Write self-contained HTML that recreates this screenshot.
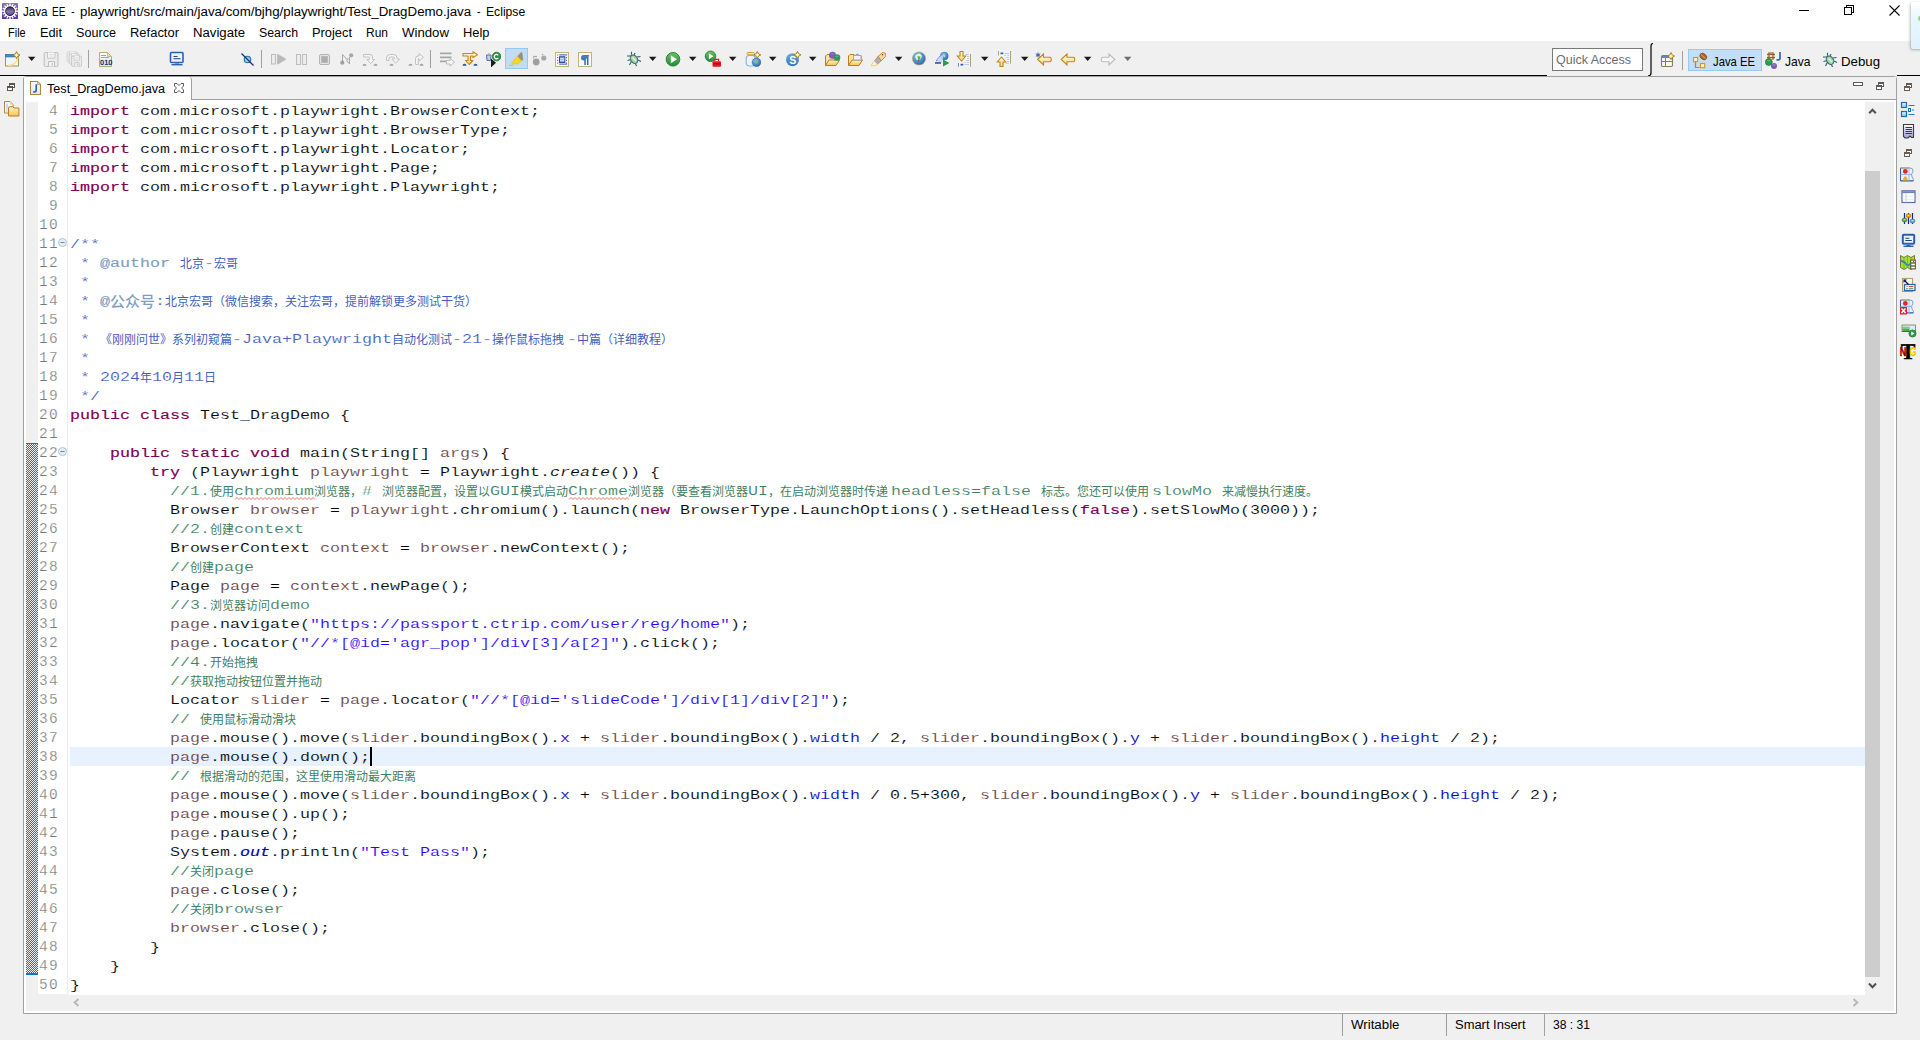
<!DOCTYPE html>
<html lang="zh"><head><meta charset="utf-8"><title>Java EE - playwright/src/main/java/com/bjhg/playwright/Test_DragDemo.java - Eclipse</title>
<style>
html,body{margin:0;padding:0}
body{width:1920px;height:1040px;overflow:hidden;background:#f0f0f0;position:relative;font-family:"Liberation Sans","Noto Sans CJK SC",sans-serif}
div,span,svg{position:absolute}
.t{white-space:pre;line-height:16px;transform-origin:0 0;font-family:"Liberation Sans","Noto Sans CJK SC",sans-serif}
.c{white-space:pre;line-height:19px;height:19px;font-family:"Liberation Mono","Noto Sans CJK SC",monospace;font-size:12.5px;transform-origin:0 0;transform:scaleX(1.3331);-webkit-text-stroke:0.12px #fff}
.c.hl{-webkit-text-stroke-color:#e8f2fe}
.c.b{-webkit-text-stroke:0.15px currentColor}
.k{white-space:pre;line-height:19px;height:19px;font-family:"Liberation Mono","Noto Sans CJK SC",monospace;font-size:12px}
.n{white-space:pre;line-height:19px;height:19px;font-family:"Liberation Mono",monospace;font-size:14.5px;letter-spacing:1.3px;color:#787878;-webkit-text-stroke:0.25px #fff}
b{font-weight:bold}
i{font-style:italic}
</style></head>
<body>
<div style="left:0px;top:0px;width:1920px;height:41px;background:#fff;"></div>
<span class="t" style="left:23px;top:3.87px;font-size:12.5px;color:#000;transform:scaleX(0.9279);">Java</span>
<span class="t" style="left:52px;top:3.87px;font-size:12.5px;color:#000;transform:scaleX(0.7976);">EE</span>
<span class="t" style="left:70.8px;top:3.87px;font-size:12.5px;color:#000;transform:scaleX(0.8649);">-</span>
<span class="t" style="left:79.7px;top:3.87px;font-size:12.5px;color:#000;transform:scaleX(1.0642);">playwright/src/main/java/com/bjhg/playwright/Test_DragDemo.java</span>
<span class="t" style="left:476.7px;top:3.87px;font-size:12.5px;color:#000;transform:scaleX(0.8409);">-</span>
<span class="t" style="left:485.8px;top:3.87px;font-size:12.5px;color:#000;transform:scaleX(0.9728);">Eclipse</span>
<span class="t" style="left:8px;top:24.87px;font-size:12.5px;color:#000;transform:scaleX(0.8788);">File</span>
<span class="t" style="left:40px;top:24.87px;font-size:12.5px;color:#000;transform:scaleX(1.0214);">Edit</span>
<span class="t" style="left:76px;top:24.87px;font-size:12.5px;color:#000;transform:scaleX(1.0100);">Source</span>
<span class="t" style="left:130px;top:24.87px;font-size:12.5px;color:#000;transform:scaleX(1.0373);">Refactor</span>
<span class="t" style="left:193px;top:24.87px;font-size:12.5px;color:#000;transform:scaleX(1.0541);">Navigate</span>
<span class="t" style="left:259px;top:24.87px;font-size:12.5px;color:#000;transform:scaleX(0.9848);">Search</span>
<span class="t" style="left:312px;top:24.87px;font-size:12.5px;color:#000;transform:scaleX(1.0282);">Project</span>
<span class="t" style="left:366px;top:24.87px;font-size:12.5px;color:#000;transform:scaleX(0.9595);">Run</span>
<span class="t" style="left:402px;top:24.87px;font-size:12.5px;color:#000;transform:scaleX(1.0572);">Window</span>
<span class="t" style="left:463px;top:24.87px;font-size:12.5px;color:#000;transform:scaleX(1.0308);">Help</span>
<svg style="left:1790px;top:0;width:130px;height:22px" viewBox="0 0 130 22"><g stroke="#000" stroke-width="1" fill="none" shape-rendering="crispEdges"><path d="M9 10.5h10"/><path d="M54.5 7.5h7v7h-7z M56.5 7.5v-2h7v7h-2"/></g><path d="M99.5 5.5l10 10M109.5 5.5l-10 10" stroke="#000" stroke-width="1.1" fill="none"/></svg>
<div style="left:0px;top:41px;width:1920px;height:34px;background:#f0f0f0;"></div>
<div style="left:0px;top:75px;width:1547px;height:1px;background:#000;"></div>
<div style="left:1897px;top:75px;width:23px;height:1px;background:#000;"></div>
<div style="left:1552px;top:48px;width:89px;height:21px;background:#fff;border:1px solid #7a7a7a"></div>
<span class="t" style="left:1556px;top:51.70px;font-size:13px;color:#6d6d6d;transform:scaleX(0.9612);">Quick Access</span>
<svg style="left:1644px;top:42px;width:10px;height:36px" viewBox="0 0 10 36"><path d="M9 1.5 Q7 1.5 7 4 V31 Q7 33.8 4 34" stroke="#000" stroke-width="1.2" fill="none"/></svg>
<div style="left:1682px;top:51px;width:1px;height:19px;background:#a0a0a0;"></div>
<div style="left:1688px;top:49px;width:72px;height:20px;background:#c5ddf5;border:1px solid #99c9f5"></div>
<span class="t" style="left:1712.5px;top:53.70px;font-size:13px;color:#000;transform:scaleX(0.8675);">Java EE</span>
<span class="t" style="left:1785px;top:53.70px;font-size:13px;color:#000;transform:scaleX(0.9287);">Java</span>
<span class="t" style="left:1841px;top:53.70px;font-size:13px;color:#000;transform:scaleX(1.0181);">Debug</span>
<div style="left:23px;top:76px;width:1872px;height:936px;border:1px solid #a0a0a0;border-radius:3px 3px 0 0;background:#fff"></div>
<div style="left:24px;top:77px;width:1872px;height:22px;background:#f0f0f0;"></div>
<div style="left:191px;top:99px;width:1705px;height:1px;background:#a0a0a0;"></div>
<div style="left:24px;top:77px;width:167px;height:23px;background:#fff;border-right:1px solid #a0a0a0;border-radius:3px 3px 0 0"></div>
<span class="t" style="left:47px;top:80.87px;font-size:12.5px;color:#000;transform:scaleX(1.0110);">Test_DragDemo.java</span>
<div style="left:26px;top:102px;width:12px;height:909px;background:#f0f0f0;"></div>
<div style="left:38px;top:994px;width:30px;height:17px;background:#f0f0f0;"></div>
<div style="left:68px;top:995px;width:1826px;height:16px;background:#f0f0f0;"></div>
<div style="left:26px;top:443px;width:12px;height:532px;background-color:#0078d7;background-image:conic-gradient(#0078d7 25%,#f0f0f0 0 50%,#0078d7 0 75%,#f0f0f0 0);background-size:2px 2px;background-position:1px 0"></div>
<div style="left:26px;top:443px;width:12px;height:1px;background:#0078d7;"></div>
<div style="left:26px;top:973px;width:12px;height:2px;background:#0078d7;"></div>
<div style="left:67px;top:102px;width:1px;height:892px;background:#ededed;"></div>
<div style="left:70px;top:747px;width:1795px;height:19px;background:#e8f2fe;"></div>
<div style="left:370px;top:747px;width:2px;height:19px;background:#000;"></div>
<div style="left:1865px;top:102px;width:29px;height:909px;background:#f0f0f0;"></div>
<div style="left:1865px;top:171px;width:15px;height:806px;background:#cdcdcd;"></div>
<svg style="left:1864px;top:103px;width:17px;height:17px" viewBox="0 0 17 17"><path d="M5.200 10.200l3.300-3.500 3.300 3.500" stroke="#505050" stroke-width="2" fill="none"/></svg>
<svg style="left:1864px;top:977px;width:17px;height:17px" viewBox="0 0 17 17"><path d="M5 6.500l3.500 3.700 3.500-3.700" stroke="#505050" stroke-width="2" fill="none"/></svg>
<svg style="left:68px;top:994px;width:17px;height:17px" viewBox="0 0 17 17"><path d="M10.500 5l-3.800 3.500 3.800 3.500" stroke="#b8b8b8" stroke-width="2" fill="none"/></svg>
<svg style="left:1847px;top:994px;width:17px;height:17px" viewBox="0 0 17 17"><path d="M6.500 5l3.800 3.500-3.800 3.500" stroke="#b8b8b8" stroke-width="2" fill="none"/></svg>
<div style="left:1342px;top:1014px;width:1px;height:22px;background:#a0a0a0;"></div>
<div style="left:1446px;top:1014px;width:1px;height:22px;background:#a0a0a0;"></div>
<div style="left:1544px;top:1014px;width:1px;height:22px;background:#a0a0a0;"></div>
<span class="t" style="left:1350.5px;top:1016.87px;font-size:12.5px;color:#000;transform:scaleX(1.0632);">Writable</span>
<span class="t" style="left:1454.5px;top:1016.87px;font-size:12.5px;color:#000;transform:scaleX(1.0357);">Smart Insert</span>
<span class="t" style="left:1552.5px;top:1016.87px;font-size:12.5px;color:#000;transform:scaleX(0.9680);">38 : 31</span>
<span class="c b" style="left:70px;top:103px;color:#7f0055;">import</span>
<span class="c" style="left:130px;top:103px;"> com.microsoft.playwright.BrowserContext;</span>
<span class="c b" style="left:70px;top:122px;color:#7f0055;">import</span>
<span class="c" style="left:130px;top:122px;"> com.microsoft.playwright.BrowserType;</span>
<span class="c b" style="left:70px;top:141px;color:#7f0055;">import</span>
<span class="c" style="left:130px;top:141px;"> com.microsoft.playwright.Locator;</span>
<span class="c b" style="left:70px;top:160px;color:#7f0055;">import</span>
<span class="c" style="left:130px;top:160px;"> com.microsoft.playwright.Page;</span>
<span class="c b" style="left:70px;top:179px;color:#7f0055;">import</span>
<span class="c" style="left:130px;top:179px;"> com.microsoft.playwright.Playwright;</span>
<span class="c" style="left:70px;top:236px;color:#3f5fbf;">/**</span>
<span class="c" style="left:70px;top:255px;color:#3f5fbf;"> * </span>
<span class="c b" style="left:100px;top:255px;color:#7f9fbf;">@author</span>
<span class="k" style="left:180px;top:256px;color:#3f5fbf;">北京</span>
<span class="c" style="left:204px;top:255px;color:#3f5fbf;">-</span>
<span class="k" style="left:214px;top:256px;color:#3f5fbf;">宏哥</span>
<span class="c" style="left:70px;top:274px;color:#3f5fbf;"> * </span>
<span class="c" style="left:70px;top:293px;color:#3f5fbf;"> * </span>
<span class="c b" style="left:100px;top:293px;color:#7f9fbf;">@</span>
<span class="k" style="left:110px;top:294px;color:#7f9fbf;font-size:15px;font-weight:500;">公众号</span>
<span class="c" style="left:155px;top:293px;color:#3f5fbf;">:</span>
<span class="k" style="left:165px;top:294px;color:#3f5fbf;">北京宏哥（微信搜索，关注宏哥，提前解锁更多测试干货）</span>
<span class="c" style="left:70px;top:312px;color:#3f5fbf;"> * </span>
<span class="c" style="left:70px;top:331px;color:#3f5fbf;"> * </span>
<span class="k" style="left:100px;top:332px;color:#3f5fbf;">《刚刚问世》系列初窥篇</span>
<span class="c" style="left:232px;top:331px;color:#3f5fbf;">-Java+Playwright</span>
<span class="k" style="left:392px;top:332px;color:#3f5fbf;">自动化测试</span>
<span class="c" style="left:452px;top:331px;color:#3f5fbf;">-21-</span>
<span class="k" style="left:492px;top:332px;color:#3f5fbf;">操作鼠标拖拽 </span>
<span class="c" style="left:567px;top:331px;color:#3f5fbf;">-</span>
<span class="k" style="left:577px;top:332px;color:#3f5fbf;">中篇（详细教程）</span>
<span class="c" style="left:70px;top:350px;color:#3f5fbf;"> * </span>
<span class="c" style="left:70px;top:369px;color:#3f5fbf;"> * 2024</span>
<span class="k" style="left:140px;top:370px;color:#3f5fbf;">年</span>
<span class="c" style="left:152px;top:369px;color:#3f5fbf;">10</span>
<span class="k" style="left:172px;top:370px;color:#3f5fbf;">月</span>
<span class="c" style="left:184px;top:369px;color:#3f5fbf;">11</span>
<span class="k" style="left:204px;top:370px;color:#3f5fbf;">日</span>
<span class="c" style="left:70px;top:388px;color:#3f5fbf;"> */</span>
<span class="c b" style="left:70px;top:407px;color:#7f0055;">public</span>
<span class="c b" style="left:140px;top:407px;color:#7f0055;">class</span>
<span class="c" style="left:190px;top:407px;"> Test_DragDemo {</span>
<span class="c b" style="left:110px;top:445px;color:#7f0055;">public</span>
<span class="c b" style="left:180px;top:445px;color:#7f0055;">static</span>
<span class="c b" style="left:250px;top:445px;color:#7f0055;">void</span>
<span class="c" style="left:290px;top:445px;"> main(String[] </span>
<span class="c" style="left:440px;top:445px;color:#6a3e3e;">args</span>
<span class="c" style="left:480px;top:445px;">) {</span>
<span class="c b" style="left:150px;top:464px;color:#7f0055;">try</span>
<span class="c" style="left:180px;top:464px;"> (Playwright </span>
<span class="c" style="left:310px;top:464px;color:#6a3e3e;">playwright</span>
<span class="c" style="left:410px;top:464px;"> = Playwright.</span>
<span class="c" style="left:550px;top:464px;font-style:italic;">create</span>
<span class="c" style="left:610px;top:464px;">()) {</span>
<span class="c" style="left:170px;top:483px;color:#3f7f5f;">//1.</span>
<span class="k" style="left:210px;top:484px;color:#3f7f5f;">使用</span>
<span class="c" style="left:234px;top:483px;color:#3f7f5f;">chromium</span>
<span class="k" style="left:314px;top:484px;color:#3f7f5f;">浏览器，</span>
<span class="c" style="left:362px;top:483px;color:#3f7f5f;"># </span>
<span class="k" style="left:382px;top:484px;color:#3f7f5f;">浏览器配置，设置以</span>
<span class="c" style="left:490px;top:483px;color:#3f7f5f;">GUI</span>
<span class="k" style="left:520px;top:484px;color:#3f7f5f;">模式启动</span>
<span class="c" style="left:568px;top:483px;color:#3f7f5f;">Chrome</span>
<span class="k" style="left:628px;top:484px;color:#3f7f5f;">浏览器（要查看浏览器</span>
<span class="c" style="left:748px;top:483px;color:#3f7f5f;">UI</span>
<span class="k" style="left:768px;top:484px;color:#3f7f5f;">，在启动浏览器时传递 </span>
<span class="c" style="left:891px;top:483px;color:#3f7f5f;">headless=false </span>
<span class="k" style="left:1041px;top:484px;color:#3f7f5f;">标志。您还可以使用 </span>
<span class="c" style="left:1152px;top:483px;color:#3f7f5f;">slowMo </span>
<span class="k" style="left:1222px;top:484px;color:#3f7f5f;">来减慢执行速度。</span>
<span class="c" style="left:70px;top:502px;">          Browser </span>
<span class="c" style="left:250px;top:502px;color:#6a3e3e;">browser</span>
<span class="c" style="left:320px;top:502px;"> = </span>
<span class="c" style="left:350px;top:502px;color:#6a3e3e;">playwright</span>
<span class="c" style="left:450px;top:502px;">.chromium().launch(</span>
<span class="c b" style="left:640px;top:502px;color:#7f0055;">new</span>
<span class="c" style="left:670px;top:502px;"> BrowserType.LaunchOptions().setHeadless(</span>
<span class="c b" style="left:1080px;top:502px;color:#7f0055;">false</span>
<span class="c" style="left:1130px;top:502px;">).setSlowMo(3000));</span>
<span class="c" style="left:170px;top:521px;color:#3f7f5f;">//2.</span>
<span class="k" style="left:210px;top:522px;color:#3f7f5f;">创建</span>
<span class="c" style="left:234px;top:521px;color:#3f7f5f;">context</span>
<span class="c" style="left:70px;top:540px;">          BrowserContext </span>
<span class="c" style="left:320px;top:540px;color:#6a3e3e;">context</span>
<span class="c" style="left:390px;top:540px;"> = </span>
<span class="c" style="left:420px;top:540px;color:#6a3e3e;">browser</span>
<span class="c" style="left:490px;top:540px;">.newContext();</span>
<span class="c" style="left:170px;top:559px;color:#3f7f5f;">//</span>
<span class="k" style="left:190px;top:560px;color:#3f7f5f;">创建</span>
<span class="c" style="left:214px;top:559px;color:#3f7f5f;">page</span>
<span class="c" style="left:70px;top:578px;">          Page </span>
<span class="c" style="left:220px;top:578px;color:#6a3e3e;">page</span>
<span class="c" style="left:260px;top:578px;"> = </span>
<span class="c" style="left:290px;top:578px;color:#6a3e3e;">context</span>
<span class="c" style="left:360px;top:578px;">.newPage();</span>
<span class="c" style="left:170px;top:597px;color:#3f7f5f;">//3.</span>
<span class="k" style="left:210px;top:598px;color:#3f7f5f;">浏览器访问</span>
<span class="c" style="left:270px;top:597px;color:#3f7f5f;">demo</span>
<span class="c" style="left:170px;top:616px;color:#6a3e3e;">page</span>
<span class="c" style="left:210px;top:616px;">.navigate(</span>
<span class="c" style="left:310px;top:616px;color:#2a00ff;">&quot;https:</span>
<span class="c" style="left:380px;top:616px;color:#2a00ff;">//passport.ctrip.com/user/reg/home&quot;</span>
<span class="c" style="left:730px;top:616px;">);</span>
<span class="c" style="left:170px;top:635px;color:#6a3e3e;">page</span>
<span class="c" style="left:210px;top:635px;">.locator(</span>
<span class="c" style="left:300px;top:635px;color:#2a00ff;">&quot;//*[@id=&#x27;agr_pop&#x27;]/div[3]/a[2]&quot;</span>
<span class="c" style="left:620px;top:635px;">).click();</span>
<span class="c" style="left:170px;top:654px;color:#3f7f5f;">//4.</span>
<span class="k" style="left:210px;top:655px;color:#3f7f5f;">开始拖拽</span>
<span class="c" style="left:170px;top:673px;color:#3f7f5f;">//</span>
<span class="k" style="left:190px;top:674px;color:#3f7f5f;">获取拖动按钮位置并拖动</span>
<span class="c" style="left:70px;top:692px;">          Locator </span>
<span class="c" style="left:250px;top:692px;color:#6a3e3e;">slider</span>
<span class="c" style="left:310px;top:692px;"> = </span>
<span class="c" style="left:340px;top:692px;color:#6a3e3e;">page</span>
<span class="c" style="left:380px;top:692px;">.locator(</span>
<span class="c" style="left:470px;top:692px;color:#2a00ff;">&quot;//*[@id=&#x27;slideCode&#x27;]/div[1]/div[2]&quot;</span>
<span class="c" style="left:830px;top:692px;">);</span>
<span class="c" style="left:170px;top:711px;color:#3f7f5f;">// </span>
<span class="k" style="left:200px;top:712px;color:#3f7f5f;">使用鼠标滑动滑块</span>
<span class="c" style="left:170px;top:730px;color:#6a3e3e;">page</span>
<span class="c" style="left:210px;top:730px;">.mouse().move(</span>
<span class="c" style="left:350px;top:730px;color:#6a3e3e;">slider</span>
<span class="c" style="left:410px;top:730px;">.boundingBox().</span>
<span class="c" style="left:560px;top:730px;color:#0000c0;">x</span>
<span class="c" style="left:570px;top:730px;"> + </span>
<span class="c" style="left:600px;top:730px;color:#6a3e3e;">slider</span>
<span class="c" style="left:660px;top:730px;">.boundingBox().</span>
<span class="c" style="left:810px;top:730px;color:#0000c0;">width</span>
<span class="c" style="left:860px;top:730px;"> / 2, </span>
<span class="c" style="left:920px;top:730px;color:#6a3e3e;">slider</span>
<span class="c" style="left:980px;top:730px;">.boundingBox().</span>
<span class="c" style="left:1130px;top:730px;color:#0000c0;">y</span>
<span class="c" style="left:1140px;top:730px;"> + </span>
<span class="c" style="left:1170px;top:730px;color:#6a3e3e;">slider</span>
<span class="c" style="left:1230px;top:730px;">.boundingBox().</span>
<span class="c" style="left:1380px;top:730px;color:#0000c0;">height</span>
<span class="c" style="left:1440px;top:730px;"> / 2);</span>
<span class="c hl" style="left:170px;top:749px;color:#6a3e3e;">page</span>
<span class="c hl" style="left:210px;top:749px;">.mouse().down();</span>
<span class="c" style="left:170px;top:768px;color:#3f7f5f;">// </span>
<span class="k" style="left:200px;top:769px;color:#3f7f5f;">根据滑动的范围，这里使用滑动最大距离</span>
<span class="c" style="left:170px;top:787px;color:#6a3e3e;">page</span>
<span class="c" style="left:210px;top:787px;">.mouse().move(</span>
<span class="c" style="left:350px;top:787px;color:#6a3e3e;">slider</span>
<span class="c" style="left:410px;top:787px;">.boundingBox().</span>
<span class="c" style="left:560px;top:787px;color:#0000c0;">x</span>
<span class="c" style="left:570px;top:787px;"> + </span>
<span class="c" style="left:600px;top:787px;color:#6a3e3e;">slider</span>
<span class="c" style="left:660px;top:787px;">.boundingBox().</span>
<span class="c" style="left:810px;top:787px;color:#0000c0;">width</span>
<span class="c" style="left:860px;top:787px;"> / 0.5+300, </span>
<span class="c" style="left:980px;top:787px;color:#6a3e3e;">slider</span>
<span class="c" style="left:1040px;top:787px;">.boundingBox().</span>
<span class="c" style="left:1190px;top:787px;color:#0000c0;">y</span>
<span class="c" style="left:1200px;top:787px;"> + </span>
<span class="c" style="left:1230px;top:787px;color:#6a3e3e;">slider</span>
<span class="c" style="left:1290px;top:787px;">.boundingBox().</span>
<span class="c" style="left:1440px;top:787px;color:#0000c0;">height</span>
<span class="c" style="left:1500px;top:787px;"> / 2);</span>
<span class="c" style="left:170px;top:806px;color:#6a3e3e;">page</span>
<span class="c" style="left:210px;top:806px;">.mouse().up();</span>
<span class="c" style="left:170px;top:825px;color:#6a3e3e;">page</span>
<span class="c" style="left:210px;top:825px;">.pause();</span>
<span class="c" style="left:70px;top:844px;">          System.</span>
<span class="c b" style="left:240px;top:844px;color:#0000c0;font-style:italic;">out</span>
<span class="c" style="left:270px;top:844px;">.println(</span>
<span class="c" style="left:360px;top:844px;color:#2a00ff;">&quot;Test Pass&quot;</span>
<span class="c" style="left:470px;top:844px;">);</span>
<span class="c" style="left:170px;top:863px;color:#3f7f5f;">//</span>
<span class="k" style="left:190px;top:864px;color:#3f7f5f;">关闭</span>
<span class="c" style="left:214px;top:863px;color:#3f7f5f;">page</span>
<span class="c" style="left:170px;top:882px;color:#6a3e3e;">page</span>
<span class="c" style="left:210px;top:882px;">.close();</span>
<span class="c" style="left:170px;top:901px;color:#3f7f5f;">//</span>
<span class="k" style="left:190px;top:902px;color:#3f7f5f;">关闭</span>
<span class="c" style="left:214px;top:901px;color:#3f7f5f;">browser</span>
<span class="c" style="left:170px;top:920px;color:#6a3e3e;">browser</span>
<span class="c" style="left:240px;top:920px;">.close();</span>
<span class="c" style="left:70px;top:939px;">        }</span>
<span class="c" style="left:70px;top:958px;">    }</span>
<span class="c" style="left:70px;top:977px;">}</span>
<span class="n" style="left:49px;top:102px">4</span>
<span class="n" style="left:49px;top:121px">5</span>
<span class="n" style="left:49px;top:140px">6</span>
<span class="n" style="left:49px;top:159px">7</span>
<span class="n" style="left:49px;top:178px">8</span>
<span class="n" style="left:49px;top:197px">9</span>
<span class="n" style="left:39px;top:216px">10</span>
<span class="n" style="left:39px;top:235px">11</span>
<span class="n" style="left:39px;top:254px">12</span>
<span class="n" style="left:39px;top:273px">13</span>
<span class="n" style="left:39px;top:292px">14</span>
<span class="n" style="left:39px;top:311px">15</span>
<span class="n" style="left:39px;top:330px">16</span>
<span class="n" style="left:39px;top:349px">17</span>
<span class="n" style="left:39px;top:368px">18</span>
<span class="n" style="left:39px;top:387px">19</span>
<span class="n" style="left:39px;top:406px">20</span>
<span class="n" style="left:39px;top:425px">21</span>
<span class="n" style="left:39px;top:444px">22</span>
<span class="n" style="left:39px;top:463px">23</span>
<span class="n" style="left:39px;top:482px">24</span>
<span class="n" style="left:39px;top:501px">25</span>
<span class="n" style="left:39px;top:520px">26</span>
<span class="n" style="left:39px;top:539px">27</span>
<span class="n" style="left:39px;top:558px">28</span>
<span class="n" style="left:39px;top:577px">29</span>
<span class="n" style="left:39px;top:596px">30</span>
<span class="n" style="left:39px;top:615px">31</span>
<span class="n" style="left:39px;top:634px">32</span>
<span class="n" style="left:39px;top:653px">33</span>
<span class="n" style="left:39px;top:672px">34</span>
<span class="n" style="left:39px;top:691px">35</span>
<span class="n" style="left:39px;top:710px">36</span>
<span class="n" style="left:39px;top:729px">37</span>
<span class="n" style="left:39px;top:748px">38</span>
<span class="n" style="left:39px;top:767px">39</span>
<span class="n" style="left:39px;top:786px">40</span>
<span class="n" style="left:39px;top:805px">41</span>
<span class="n" style="left:39px;top:824px">42</span>
<span class="n" style="left:39px;top:843px">43</span>
<span class="n" style="left:39px;top:862px">44</span>
<span class="n" style="left:39px;top:881px">45</span>
<span class="n" style="left:39px;top:900px">46</span>
<span class="n" style="left:39px;top:919px">47</span>
<span class="n" style="left:39px;top:938px">48</span>
<span class="n" style="left:39px;top:957px">49</span>
<span class="n" style="left:39px;top:976px">50</span>
<svg style="left:58px;top:238px;width:10px;height:10px" viewBox="0 0 10 10"><circle cx="4.500" cy="4.500" r="4" fill="#e8eff6" stroke="#b4c4d8" stroke-width="1"/><path d="M2.300 4.500h4.400" stroke="#7c8ca4" stroke-width="1.100"/></svg>
<svg style="left:58px;top:447px;width:10px;height:10px" viewBox="0 0 10 10"><circle cx="4.500" cy="4.500" r="4" fill="#e8eff6" stroke="#b4c4d8" stroke-width="1"/><path d="M2.300 4.500h4.400" stroke="#7c8ca4" stroke-width="1.100"/></svg>
<svg style="left:0;top:0;width:1920px;height:1040px;pointer-events:none" viewBox="0 0 1920 1040"><path d="M235 499.5 L237 497.5 L239 499.5 L241 497.5 L243 499.5 L245 497.5 L247 499.5 L249 497.5 L251 499.5 L253 497.5 L255 499.5 L257 497.5 L259 499.5 L261 497.5 L263 499.5 L265 497.5 L267 499.5 L269 497.5 L271 499.5 L273 497.5 L275 499.5 L277 497.5 L279 499.5 L281 497.5 L283 499.5 L285 497.5 L287 499.5 L289 497.5 L291 499.5 L293 497.5 L295 499.5 L297 497.5 L299 499.5 L301 497.5 L303 499.5 L305 497.5 L307 499.5 L309 497.5 L311 499.5 L313 497.5 L315 499.5" stroke="#f0785a" stroke-width="1" fill="none"/></svg>
<svg style="left:0;top:0;width:1920px;height:1040px;pointer-events:none" viewBox="0 0 1920 1040"><path d="M569 499.5 L571 497.5 L573 499.5 L575 497.5 L577 499.5 L579 497.5 L581 499.5 L583 497.5 L585 499.5 L587 497.5 L589 499.5 L591 497.5 L593 499.5 L595 497.5 L597 499.5 L599 497.5 L601 499.5 L603 497.5 L605 499.5 L607 497.5 L609 499.5 L611 497.5 L613 499.5 L615 497.5 L617 499.5 L619 497.5 L621 499.5 L623 497.5 L625 499.5 L627 497.5 L629 499.5" stroke="#f0785a" stroke-width="1" fill="none"/></svg>
<svg style="left:0;top:0;width:0;height:0"><defs>
<linearGradient id="gGold" x1="0" y1="0" x2="0" y2="1"><stop offset="0" stop-color="#fffbe6"/><stop offset="1" stop-color="#f7d774"/></linearGradient>
<linearGradient id="gGreen" x1="0" y1="0" x2="0" y2="1"><stop offset="0" stop-color="#6cc25c"/><stop offset="1" stop-color="#1f8a3a"/></linearGradient>
<linearGradient id="gFold" x1="0" y1="0" x2="0" y2="1"><stop offset="0" stop-color="#fff3c4"/><stop offset="1" stop-color="#f2c45c"/></linearGradient>
<linearGradient id="gGray" x1="0" y1="0" x2="0" y2="1"><stop offset="0" stop-color="#f4f4f4"/><stop offset="1" stop-color="#dcdcdc"/></linearGradient>
<linearGradient id="gBlue" x1="0" y1="0" x2="0" y2="1"><stop offset="0" stop-color="#6aa6dc"/><stop offset="1" stop-color="#3a78b8"/></linearGradient>
<linearGradient id="gPage" x1="0" y1="0" x2="0" y2="1"><stop offset="0" stop-color="#ffffff"/><stop offset="1" stop-color="#dbe7f7"/></linearGradient>
<radialGradient id="gGlobe" cx="0.4" cy="0.35" r="0.7"><stop offset="0" stop-color="#7fd0f0"/><stop offset="1" stop-color="#1f5fb8"/></radialGradient>
</defs></svg>
<div style="left:88px;top:50px;width:1px;height:18px;background:#a0a0a0;"></div>
<div style="left:261px;top:50px;width:1px;height:18px;background:#a0a0a0;"></div>
<div style="left:430px;top:50px;width:1px;height:18px;background:#a0a0a0;"></div>
<svg style="left:4px;top:51px;width:16px;height:16px" viewBox="0 0 16 16"><rect x="1.5" y="3.5" width="13" height="11.5" fill="#eef6fd" stroke="#a88f4a"/><rect x="1.5" y="3.5" width="9" height="2.5" fill="#3c8ad0" stroke="#2f72b8" stroke-width=".6"/><path d="M4 14.5q8 0 10-8" stroke="#f6dd8a" stroke-width="1.4" fill="none"/><path d="M12.5 0.6l1.200 2.300 2.300 1.200-2.300 1.200-1.200 2.300-1.200-2.300-2.300-1.200 2.300-1.200z" fill="#e9bd3a" stroke="#a87c14" stroke-width=".9" stroke-linejoin="round"/><path d="M12.5 2.4v3.400M10.8 4.1h3.400" stroke="#fffdf0" stroke-width="1.100"/></svg>
<svg style="left:28px;top:56px;width:8px;height:6px" viewBox="0 0 8 6"><path d="M0 .8h7.4L3.7 5z" fill="#1a1a1a"/></svg>
<svg style="left:43px;top:51px;width:16px;height:16px" viewBox="0 0 16 16"><g transform="translate(1 1) scale(1.0)" opacity="1"><path d="M1.500 0.500h11.200q1.300 0 1.300 1.300v11.400q0 1.300-1.300 1.300h-11.200q-1.300 0-1.300-1.300v-11.400q0-1.300 1.300-1.300z" fill="#ececec" stroke="#bdbdbd"/><path d="M3.500 0.500v5.800h7.500v-5.800" fill="#f6f6f6" stroke="#c6c6c6"/><path d="M5 2.500h4.500M5 4.200h4.500" stroke="#dcdcdc" stroke-width=".8"/><path d="M4.500 14.500v-5h6v5" fill="#f2f2f2" stroke="#bdbdbd"/><path d="M8.300 11v2.500" stroke="#c0c0c0" stroke-width="1.200"/></g></svg>
<svg style="left:66px;top:51px;width:16px;height:16px" viewBox="0 0 16 16"><g transform="translate(1 0.5) scale(0.72)" opacity="0.7"><path d="M1.500 0.500h11.200q1.300 0 1.300 1.300v11.400q0 1.300-1.300 1.300h-11.200q-1.300 0-1.300-1.300v-11.400q0-1.300 1.300-1.300z" fill="#ececec" stroke="#bdbdbd"/><path d="M3.500 0.500v5.800h7.500v-5.800" fill="#f6f6f6" stroke="#c6c6c6"/><path d="M5 2.500h4.500M5 4.200h4.500" stroke="#dcdcdc" stroke-width=".8"/><path d="M4.500 14.500v-5h6v5" fill="#f2f2f2" stroke="#bdbdbd"/><path d="M8.300 11v2.500" stroke="#c0c0c0" stroke-width="1.200"/></g><g transform="translate(3 2.5) scale(0.72)" opacity="0.85"><path d="M1.500 0.500h11.200q1.300 0 1.300 1.300v11.400q0 1.300-1.300 1.300h-11.200q-1.300 0-1.300-1.300v-11.400q0-1.300 1.300-1.300z" fill="#ececec" stroke="#bdbdbd"/><path d="M3.500 0.500v5.800h7.500v-5.800" fill="#f6f6f6" stroke="#c6c6c6"/><path d="M5 2.500h4.500M5 4.200h4.500" stroke="#dcdcdc" stroke-width=".8"/><path d="M4.500 14.500v-5h6v5" fill="#f2f2f2" stroke="#bdbdbd"/><path d="M8.300 11v2.500" stroke="#c0c0c0" stroke-width="1.200"/></g><g transform="translate(5.5 4.8) scale(0.72)" opacity="1"><path d="M1.500 0.500h11.200q1.300 0 1.300 1.300v11.400q0 1.300-1.300 1.300h-11.200q-1.300 0-1.300-1.300v-11.400q0-1.300 1.300-1.300z" fill="#ececec" stroke="#bdbdbd"/><path d="M3.500 0.500v5.800h7.500v-5.800" fill="#f6f6f6" stroke="#c6c6c6"/><path d="M5 2.500h4.500M5 4.200h4.500" stroke="#dcdcdc" stroke-width=".8"/><path d="M4.500 14.500v-5h6v5" fill="#f2f2f2" stroke="#bdbdbd"/><path d="M8.300 11v2.500" stroke="#c0c0c0" stroke-width="1.200"/></g></svg>
<svg style="left:98px;top:51px;width:16px;height:16px" viewBox="0 0 16 16"><path d="M1.5 1.5h8l4 4v10h-12z" fill="url(#gPage)" stroke="#b9a877"/><path d="M9.5 1.5v4h4z" fill="#f3dfa0" stroke="#b9a877" stroke-width=".7"/><path d="M3 4.5h5M3 6.5h8" stroke="#8aa2d0" stroke-width="1.2"/><text x="2" y="14.200" font-family="Liberation Sans,sans-serif" font-weight="bold" font-size="7.500" fill="#16306c" textLength="12.500" lengthAdjust="spacingAndGlyphs" style="text-rendering:geometricPrecision">010</text></svg>
<svg style="left:169px;top:51px;width:16px;height:16px" viewBox="0 0 16 16"><rect x="1.5" y="1.5" width="12.5" height="10" rx="1" fill="#e9f4ff" stroke="#2a62b4" stroke-width="1.6"/><path d="M4.5 5.5h4M4.5 7.7h7" stroke="#27408a" stroke-width="1.1"/><path d="M6 12.5h4v1h-4z" fill="#2a62b4"/><path d="M2.5 13.7h11" stroke="#2a62b4" stroke-width="1.4"/></svg>
<svg style="left:239px;top:51px;width:16px;height:16px" viewBox="0 0 16 16"><circle cx="8.5" cy="8.5" r="3.2" fill="#a9cde3" stroke="#2b7fb2" stroke-width="1.3"/><path d="M2.5 2.5l12 12" stroke="#1d2c7c" stroke-width="1.2"/></svg>
<svg style="left:270px;top:51px;width:16px;height:16px" viewBox="0 0 16 16"><rect x="1.5" y="3.5" width="4" height="9.5" fill="#ececec" stroke="#bdbdbd"/><path d="M7.5 3.2v10l8.5-5z" fill="#b9b9b9" stroke="#b0b0b0" stroke-width=".6"/></svg>
<svg style="left:293px;top:51px;width:16px;height:16px" viewBox="0 0 16 16"><rect x="3.5" y="3.5" width="4" height="10" fill="#ececec" stroke="#bdbdbd"/><rect x="9.5" y="3.5" width="4" height="10" fill="#ececec" stroke="#bdbdbd"/></svg>
<svg style="left:316px;top:51px;width:16px;height:16px" viewBox="0 0 16 16"><rect x="3.5" y="3.5" width="10" height="10" rx="1.5" fill="#e4e4e4" stroke="#b4b4b4"/><rect x="5.2" y="5.2" width="6.6" height="6.6" fill="#adadad"/></svg>
<svg style="left:339px;top:51px;width:16px;height:16px" viewBox="0 0 16 16"><path d="M3.5 10.5v-7l4 4.5h2l-2 1.5 3 3.5v-7" stroke="#a8a8a8" stroke-width="1" fill="none"/><circle cx="3.3" cy="11.7" r="2.1" fill="#a0a0a0"/><circle cx="12.2" cy="4.3" r="2.1" fill="#a8a8a8"/></svg>
<svg style="left:362px;top:51px;width:16px;height:16px" viewBox="0 0 16 16"><path d="M1.500 3.500H8Q10.500 3.500 10.500 6V8.500H12.500L8.700 12.700L5 8.500H7.500V6.500Q7.500 6 7 6H1.500Z" fill="#f4f4f4" stroke="#c2c2c2"/><path d="M0.5 14.800a2 2 0 0 1 4 0z" fill="#a4a4a4"/><path d="M11.5 14.800a2 2 0 0 1 4 0z" fill="#a4a4a4"/></svg>
<svg style="left:385px;top:51px;width:16px;height:16px" viewBox="0 0 16 16"><path d="M1.500 9.500V7Q1.500 3.500 5 3.500H8.500Q12 3.500 12 7V8H14.500L10.700 12.300L7 8H9.500V7.500Q9.500 6 8 6H5.500Q4 6 4 7.500V9.500Z" fill="#f4f4f4" stroke="#c2c2c2"/><path d="M4.5 14.800a2 2 0 0 1 4 0z" fill="#a4a4a4"/></svg>
<svg style="left:408px;top:51px;width:16px;height:16px" viewBox="0 0 16 16"><path d="M7.500 13.500V7.500Q7.500 5 10 5H11V2.500L15.500 6.300L11 10V7.500H10.300V13.500Z" fill="#f4f4f4" stroke="#c2c2c2"/><path d="M0.5 14.800a2 2 0 0 1 4 0z" fill="#a4a4a4"/><path d="M11.5 14.800a2 2 0 0 1 4 0z" fill="#a4a4a4"/></svg>
<svg style="left:439px;top:51px;width:16px;height:16px" viewBox="0 0 16 16"><path d="M1 2.300h11.500M1 6.300h11.500M1 10.300h7" stroke="#a6a6a6" stroke-width="1.700"/><path d="M7.500 9.500H11V7.500L15.500 11.200L11 15V13H7.500Z" fill="#f6f6f6" stroke="#bcbcbc"/></svg>
<svg style="left:462px;top:51px;width:16px;height:16px" viewBox="0 0 16 16"><path d="M1 2.500H11V0.800L15.500 3.700L11 6.600V5H8.500V9.500H11L7.200 13.500L3.500 9.500H6V5H1Z" fill="url(#gGold)" stroke="#c4861c" stroke-width="1.100" stroke-linejoin="round"/><path d="M0.5 14.800a2 2 0 0 1 4 0z" fill="#2a5a94"/><path d="M11.5 14.800a2 2 0 0 1 4 0z" fill="#2a5a94"/></svg>
<svg style="left:485px;top:51px;width:16px;height:16px" viewBox="0 0 16 16"><path d="M1.500 4h4.500l-.5 5.500h-3.500z" fill="#b8d2f0" stroke="#5a6ab8"/><path d="M2.500 3.500q1.200-2 2.500 0" stroke="#c9a0a0" fill="none"/><circle cx="11.600" cy="5.500" r="4.300" fill="#2f8f4a" stroke="#1f7a3a" stroke-width=".8"/><path d="M13.300 4.300a2.200 2.200 0 1 0 0 2.500" stroke="#fff" stroke-width="1.300" fill="none"/><path d="M6 7.500v9l5-4.700z" fill="#1c1c1c"/></svg>
<div style="left:505px;top:48px;width:21px;height:19px;background:#c4dcf3;border:1px solid #92c9f7"></div>
<svg style="left:508px;top:51px;width:16px;height:16px" viewBox="0 0 16 16"><path d="M9.500 5.500l3.500-4 1 .3.800 7-1.300 1z" fill="#9a9276" stroke="#8a8266" stroke-width=".5"/><path d="M3.500 12l6-6.500 4 4.300-4 3.400z" fill="#f5d824" stroke="#e2bd18" stroke-width=".6"/><path d="M1 14.300l4.500-.2" stroke="#eec81c" stroke-width="1.200"/></svg>
<svg style="left:532px;top:51px;width:16px;height:16px" viewBox="0 0 16 16"><path d="M1.500 5.500h3.500" stroke="#a8a8a8" stroke-width="1.200"/><circle cx="4.200" cy="11" r="3.400" fill="#a0a0a0"/><circle cx="11.800" cy="7" r="2.600" fill="#a8a8a8"/><circle cx="10.500" cy="3.500" r=".8" fill="#a8a8a8"/><path d="M1.500 5.500v2" stroke="#a8a8a8"/></svg>
<svg style="left:554px;top:51px;width:16px;height:16px" viewBox="0 0 16 16"><rect x="1.500" y="1.500" width="13" height="14" fill="#fff" stroke="#c6b276" stroke-width="1"/><path d="M3.200 4h1M3.200 6.700h1M3.200 9.400h1M3.200 12.100h1M12 6.700h1M12 9.400h1M12 12.100h1" stroke="#3c5ea8" stroke-width="1.200"/><path d="M5.200 3.900h8M5.200 13.100h8" stroke="#5a78b8" stroke-width="1.100"/><rect x="5.500" y="5.800" width="5.300" height="5.600" fill="#9ab4e0" stroke="#2c4a8c" stroke-width="1.100"/><path d="M6 7.700h4.300M6 9.500h4.300" stroke="#e8f0fc" stroke-width=".7"/></svg>
<svg style="left:577px;top:51px;width:16px;height:16px" viewBox="0 0 16 16"><rect x="1.500" y="1.500" width="13" height="14" fill="#f6fcff" stroke="#c6b276" stroke-width="1"/><path d="M8 4.500v9.500M10.700 4.500v9.500" stroke="#2f6cb0" stroke-width="1.500"/><path d="M12.200 4h-5.500a2.700 2.700 0 0 0 0 5.400h1.300z" fill="#3f7cc0"/></svg>
<svg style="left:626px;top:51px;width:16px;height:16px" viewBox="0 0 16 16"><g stroke="#2b5f63" stroke-width="1.100" fill="none"><path d="M5.500 0.800v3M9 2l-1 2.200M1 5h4M1.500 9.500l3.500-1M3.500 14l1.800-3.500M14.500 5.500l-3.500 0.500M15 10.500l-3-1.500M10.500 15l-1.500-3.500"/></g><ellipse cx="8" cy="8.200" rx="3.300" ry="4.500" transform="rotate(-35 8 8.200)" fill="#a9d3a3" stroke="#2a6f80" stroke-width="1.100"/><path d="M6.500 6.500l3.500 3.500" stroke="#e4f4e0" stroke-width="1.400"/></svg>
<svg style="left:649px;top:56px;width:8px;height:6px" viewBox="0 0 8 6"><path d="M0 .8h7.4L3.7 5z" fill="#1a1a1a"/></svg>
<svg style="left:665px;top:51px;width:16px;height:16px" viewBox="0 0 16 16"><circle cx="8" cy="8.300" r="6.800" fill="url(#gGreen)" stroke="#1f7a35" stroke-width=".9"/><path d="M5.800 4.300v8l6.200-4z" fill="#fff"/></svg>
<svg style="left:689px;top:56px;width:8px;height:6px" viewBox="0 0 8 6"><path d="M0 .8h7.4L3.7 5z" fill="#1a1a1a"/></svg>
<svg style="left:704px;top:49px;width:18px;height:19px" viewBox="0 0 18 19"><circle cx="6.500" cy="7.300" r="5.300" fill="url(#gGreen)" stroke="#1f7a35" stroke-width=".8"/><path d="M4.800 4.300v6l4.700-3z" fill="#fff"/><rect x="8.500" y="12.200" width="8.500" height="5.600" rx="1" fill="#e0191f"/><path d="M10.800 12v-1.600h3.800v1.600" stroke="#e0191f" stroke-width="1.200" fill="none"/><path d="M9 14.800h7.500" stroke="#8c0d10" stroke-width=".9"/></svg>
<svg style="left:729px;top:56px;width:8px;height:6px" viewBox="0 0 8 6"><path d="M0 .8h7.4L3.7 5z" fill="#1a1a1a"/></svg>
<svg style="left:745px;top:51px;width:16px;height:16px" viewBox="0 0 16 16"><rect x="1.200" y="4.500" width="9" height="10.500" rx="3" fill="#eef4fc" stroke="#8fb0dc" stroke-width="1.100"/><rect x="2" y="1.500" width="7.500" height="2.300" rx="1" fill="#fbe9a8" stroke="#c99a2a" stroke-width=".9"/><circle cx="11.500" cy="11.300" r="4.300" fill="url(#gGlobe)" stroke="#3a5aa8" stroke-width=".6"/><path d="M9.800 10q1.500-1.500 3 .2l-1 2.500q-1.500 0-2-2.700z" fill="#7fc06a"/><path d="M12.3 0.4l1.200 2.300 2.300 1.200-2.300 1.200-1.200 2.300-1.200-2.300-2.300-1.200 2.300-1.200z" fill="#e9bd3a" stroke="#a87c14" stroke-width=".9" stroke-linejoin="round"/><path d="M12.3 2.2v3.400M10.6 3.9h3.400" stroke="#fffdf0" stroke-width="1.100"/></svg>
<svg style="left:769px;top:56px;width:8px;height:6px" viewBox="0 0 8 6"><path d="M0 .8h7.4L3.7 5z" fill="#1a1a1a"/></svg>
<svg style="left:785px;top:51px;width:16px;height:16px" viewBox="0 0 16 16"><circle cx="7.500" cy="8.700" r="6.500" fill="url(#gBlue)"/><text x="4.300" y="12.600" font-family="Liberation Sans,sans-serif" font-weight="bold" font-size="10.500" fill="#fff">S</text><path d="M12.5 0.4l1.200 2.300 2.300 1.200-2.300 1.200-1.200 2.300-1.200-2.300-2.300-1.200 2.300-1.200z" fill="#e9bd3a" stroke="#a87c14" stroke-width=".9" stroke-linejoin="round"/><path d="M12.5 2.2v3.400M10.8 3.9h3.400" stroke="#fffdf0" stroke-width="1.100"/></svg>
<svg style="left:809px;top:56px;width:8px;height:6px" viewBox="0 0 8 6"><path d="M0 .8h7.4L3.7 5z" fill="#1a1a1a"/></svg>
<svg style="left:824px;top:51px;width:17px;height:16px" viewBox="0 0 17 16"><path d="M1.500 14.500v-9.500l1.500-1.500h4l1.500 1.500h5.500v4" fill="#fbe3a0" stroke="#c07a1c"/><path d="M1.500 14.500l3.500-5.500h10.500l-3.500 5.500z" fill="url(#gFold)" stroke="#c07a1c"/><circle cx="8.500" cy="4.300" r="3.500" fill="#7a5cb8"/><circle cx="13" cy="6.500" r="3.300" fill="#2f9a58"/><path d="M7 3h3M11.500 5.300h3" stroke="#b8a8e0" stroke-width=".8" opacity=".7"/></svg>
<svg style="left:847px;top:51px;width:16px;height:16px" viewBox="0 0 16 16"><path d="M1.500 14.500v-9.500l1.500-1.500h4l1.500 1.500h5.500v4" fill="#fbe3a0" stroke="#c07a1c"/><path d="M1.500 14.500l3.500-5.500h10.500l-3.500 5.500z" fill="url(#gFold)" stroke="#c07a1c"/><rect x="6.500" y="4.500" width="7.500" height="4.500" fill="#f2f6fc" stroke="#9aa6bc"/><path d="M8.500 4.200q1.800-2.600 3.600 0" fill="#b8c4e0" stroke="#8a9ac4"/></svg>
<svg style="left:870px;top:51px;width:16px;height:16px" viewBox="0 0 16 16"><path d="M8 5.500l4.500-4 3 .8.300 3-4.600 4.500z" fill="#fbd98a" stroke="#d8901c"/><path d="M4.500 10l3.500-4.500 3.200 4.300-3.700 3.200z" fill="#b4aeb4" stroke="#a08868" stroke-width=".8"/><path d="M1 14.500l3.500-4.500 3 3.800-3.500 1z" fill="#fff8d0" stroke="#f0c850" stroke-width=".8"/><circle cx="12.500" cy="3.800" r=".8" fill="#3c5ea8"/></svg>
<svg style="left:895px;top:56px;width:8px;height:6px" viewBox="0 0 8 6"><path d="M0 .8h7.4L3.7 5z" fill="#1a1a1a"/></svg>
<svg style="left:911px;top:50px;width:16px;height:17px" viewBox="0 0 16 17"><circle cx="8" cy="8.500" r="6.600" fill="url(#gGlobe)" stroke="#c8b060" stroke-width=".7"/><path d="M4 6q2-3 5-2.500l2 2.500-1.500 3-2.500 1.500-2-1.500z" fill="#e8f4e0"/><path d="M6.500 6l3 .5-.5 3-2 1z" fill="#6ab04a"/><circle cx="7.300" cy="10.800" r=".7" fill="#d01c1c"/></svg>
<svg style="left:934px;top:51px;width:16px;height:16px" viewBox="0 0 16 16"><circle cx="10.300" cy="5" r="4" fill="url(#gGlobe)" stroke="#5a7ab8" stroke-width=".5"/><path d="M9 4l2 .5v2z" fill="#e4f0c8"/><path d="M1 12l5.500-7.500h3l-1.500 7.500z" fill="#c4d8f0" opacity=".9"/><path d="M1 12h6" stroke="#1c2c8c" stroke-width="1.300"/><path d="M2.500 10q1.500-4 5-5.500" stroke="#3c5cc0" stroke-width="1" fill="none" stroke-dasharray="1.500 1"/><path d="M9 8.500v7l6.500-3.500z" fill="#2f9a4a"/></svg>
<svg style="left:956px;top:50px;width:16px;height:18px" viewBox="0 0 16 18"><rect x="2.500" y="4" width="12" height="12.700" fill="#f0f5fc"/><path d="M14.500 4v12.700" stroke="#a8a078"/><path d="M2.500 13v3.700" stroke="#7a8ab8"/><path d="M9.500 4.500h3M11 6.500h2M11 8.500h2M10 10.500h3M8.500 12.500h1.500M11 12.500h2M8.500 14.500h4.500" stroke="#c0c4e0" stroke-width="1"/><rect x="4.500" y="13.800" width="2.800" height="1.700" fill="#2c5ea8"/><path d="M4 1.500h3v4.500h2.700l-4.200 5-4.200-5h2.700z" fill="url(#gGold)" stroke="#c4861c" stroke-width="1.100"/></svg>
<svg style="left:981px;top:56px;width:8px;height:6px" viewBox="0 0 8 6"><path d="M0 .8h7.4L3.7 5z" fill="#1a1a1a"/></svg>
<svg style="left:996px;top:50px;width:16px;height:18px" viewBox="0 0 16 18"><rect x="2.500" y="1" width="12" height="12.700" fill="#f0f5fc"/><path d="M14.500 1v12.700" stroke="#a8a078"/><path d="M2.500 1v4.500" stroke="#b0a470"/><path d="M8.500 3.500h4.500M8.500 5.500h1.500M11.500 5.500h1.500M10.500 7.500h2.500M11 9.500h2M11 11.500h2M9.500 13.200h3.500" stroke="#c0c4e0" stroke-width="1"/><rect x="4.500" y="2.500" width="2.800" height="1.700" fill="#2c5ea8"/><path d="M4 16.500h3v-4.500h2.700l-4.200-5-4.200 5h2.700z" fill="url(#gGold)" stroke="#c4861c" stroke-width="1.100"/></svg>
<svg style="left:1021px;top:56px;width:8px;height:6px" viewBox="0 0 8 6"><path d="M0 .8h7.4L3.7 5z" fill="#1a1a1a"/></svg>
<svg style="left:1035px;top:51px;width:18px;height:16px" viewBox="0 0 18 16"><path d="M2.7 8.500l5.800-5.500v3.200h6.200q1.500 0 1.500 1.500v1.600q0 1.500-1.500 1.500h-6.200v3.200z" fill="url(#gGold)" stroke="#c4861c" stroke-width="1.100"/><path d="M3 1.500v5M0.800 2.800l4.400 2.500M5.200 2.800l-4.400 2.500" stroke="#2c5ea8" stroke-width="1"/></svg>
<svg style="left:1060px;top:51px;width:16px;height:16px" viewBox="0 0 16 16"><path d="M1.2 8.500l5.800-5.500v3.200h6.200q1.500 0 1.500 1.500v1.600q0 1.500-1.500 1.500h-6.200v3.200z" fill="url(#gGold)" stroke="#c4861c" stroke-width="1.100"/></svg>
<svg style="left:1084px;top:56px;width:8px;height:6px" viewBox="0 0 8 6"><path d="M0 .8h7.4L3.7 5z" fill="#1a1a1a"/></svg>
<svg style="left:1100px;top:51px;width:16px;height:16px" viewBox="0 0 16 16"><path d="M14.800 8.500l-5.800-5.500v3.200h-6.200q-1.500 0-1.500 1.500v1.600q0 1.500 1.500 1.500h6.200v3.200z" fill="#f6f6f6" stroke="#bcbcbc" stroke-width="1.100"/></svg>
<svg style="left:1124px;top:56px;width:8px;height:6px" viewBox="0 0 8 6"><path d="M0 .8h7.4L3.7 5z" fill="#6e6e6e"/></svg>
<svg style="left:2px;top:3px;width:16px;height:16px" viewBox="0 0 16 16"><defs><linearGradient id="gEc" x1="0" y1="0" x2="0" y2="1"><stop offset="0" stop-color="#8d72ae"/><stop offset="1" stop-color="#5a3a9c"/></linearGradient><linearGradient id="gEc2" x1="0" y1="0" x2="0" y2="1"><stop offset="0" stop-color="#2c2a4c"/><stop offset=".55" stop-color="#8878b4"/><stop offset="1" stop-color="#4c3c84"/></linearGradient></defs><rect width="16" height="16" rx=".6" fill="url(#gEc)"/><g transform="translate(8 8.200)" fill="#fff"><circle r="5.900"/><rect x="-0.700" y="-7.900" width="1.400" height="3" transform="rotate(0.0)"/><rect x="-0.700" y="-7.900" width="1.400" height="3" transform="rotate(22.5)"/><rect x="-0.700" y="-7.900" width="1.400" height="3" transform="rotate(45.0)"/><rect x="-0.700" y="-7.900" width="1.400" height="3" transform="rotate(67.5)"/><rect x="-0.700" y="-7.900" width="1.400" height="3" transform="rotate(90.0)"/><rect x="-0.700" y="-7.900" width="1.400" height="3" transform="rotate(112.5)"/><rect x="-0.700" y="-7.900" width="1.400" height="3" transform="rotate(135.0)"/><rect x="-0.700" y="-7.900" width="1.400" height="3" transform="rotate(157.5)"/><rect x="-0.700" y="-7.900" width="1.400" height="3" transform="rotate(180.0)"/><rect x="-0.700" y="-7.900" width="1.400" height="3" transform="rotate(202.5)"/><rect x="-0.700" y="-7.900" width="1.400" height="3" transform="rotate(225.0)"/><rect x="-0.700" y="-7.900" width="1.400" height="3" transform="rotate(247.5)"/><rect x="-0.700" y="-7.900" width="1.400" height="3" transform="rotate(270.0)"/><rect x="-0.700" y="-7.900" width="1.400" height="3" transform="rotate(292.5)"/><rect x="-0.700" y="-7.900" width="1.400" height="3" transform="rotate(315.0)"/><rect x="-0.700" y="-7.900" width="1.400" height="3" transform="rotate(337.5)"/></g><circle cx="8" cy="8.200" r="4.400" fill="url(#gEc2)" stroke="#1c1c30" stroke-width=".9"/></svg>
<svg style="left:29px;top:80px;width:13px;height:16px" viewBox="0 0 13 16"><path d="M1.500 1.500h7l3 3v10h-10z" fill="url(#gPage)" stroke="#a38a3c" stroke-width="1.100"/><path d="M8.500 1.500v3h3z" fill="#f1dca0" stroke="#a38a3c" stroke-width=".6"/><path d="M7.200 4.300v5.700q0 1.800-1.800 1.800h-1.200" stroke="#2a6ab4" stroke-width="1.700" fill="none"/></svg>
<svg style="left:173px;top:82px;width:12px;height:12px" viewBox="0 0 12 12"><path d="M1.500 1.500h2.500l2 2 2-2h2.500v2.500l-2 2 2 2v2.500h-2.500l-2-2-2 2h-2.500v-2.500l2-2-2-2z" fill="#fff" stroke="#5a5a5a" stroke-width="1"/></svg>
<svg style="left:7px;top:83px;width:8px;height:8px" viewBox="0 0 8 8" shape-rendering="crispEdges"><rect x="2" y="0" width="6" height="5" fill="#5c564e"/><rect x="3" y="2" width="4" height="2" fill="#fff"/><rect x="0" y="3" width="6" height="5" fill="#5c564e"/><rect x="1" y="5" width="4" height="2" fill="#fff"/></svg>
<svg style="left:1876px;top:82px;width:8px;height:8px" viewBox="0 0 8 8" shape-rendering="crispEdges"><rect x="2" y="0" width="6" height="5" fill="#5a5a5a"/><rect x="3" y="2" width="4" height="2" fill="#fff"/><rect x="0" y="3" width="6" height="5" fill="#5a5a5a"/><rect x="1" y="5" width="4" height="2" fill="#fff"/></svg>
<svg style="left:1904px;top:83px;width:8px;height:8px" viewBox="0 0 8 8" shape-rendering="crispEdges"><rect x="2" y="0" width="6" height="5" fill="#6a5e54"/><rect x="3" y="2" width="4" height="2" fill="#fff"/><rect x="0" y="3" width="6" height="5" fill="#6a5e54"/><rect x="1" y="5" width="4" height="2" fill="#fff"/></svg>
<svg style="left:1904px;top:149px;width:8px;height:8px" viewBox="0 0 8 8" shape-rendering="crispEdges"><rect x="2" y="0" width="6" height="5" fill="#6a5e54"/><rect x="3" y="2" width="4" height="2" fill="#fff"/><rect x="0" y="3" width="6" height="5" fill="#6a5e54"/><rect x="1" y="5" width="4" height="2" fill="#fff"/></svg>
<div style="left:1853px;top:82px;width:8px;height:2px;border:1px solid #5a5a5a;background:#fff"></div>
<svg style="left:3px;top:100px;width:17px;height:17px" viewBox="0 0 17 17"><path d="M1.500 1.500h5.500l3 3v8.500h-8.500z" fill="#f4f8fe" stroke="#a08c50"/><path d="M7 1.500v3h3z" fill="#ecd89a"/><path d="M3 5h2M3 7h3M3 9h1.500M3 11h1.500" stroke="#9ab0d8" stroke-width=".9"/><path d="M5.500 16v-8l1.200-1.300h3l1.200 1.300h5v8z" fill="url(#gFold)" stroke="#c07a1c" stroke-width="1"/></svg>
<svg style="left:1660px;top:52px;width:16px;height:16px" viewBox="0 0 16 16"><rect x="1.500" y="3.500" width="11" height="11" rx="1.200" fill="#f4f9fe" stroke="#8c7c54" stroke-width="1.100"/><path d="M1.500 4h7.500v2h-7.500z" fill="#4a8ed0"/><path d="M5.500 6v8.500M1.500 9.500h11" stroke="#8c7c54" stroke-width="1"/><path d="M11 0.6l1.200 2.300 2.300 1.200-2.300 1.200-1.200 2.300-1.200-2.300-2.300-1.200 2.300-1.200z" fill="#e9bd3a" stroke="#a87c14" stroke-width=".9" stroke-linejoin="round"/><path d="M11 2.4v3.400M9.3 4.1h3.400" stroke="#fffdf0" stroke-width="1.100"/></svg>
<svg style="left:1692px;top:52px;width:16px;height:18px" viewBox="0 0 16 18"><path d="M3.500 8v7.500h4" stroke="#b08a2a" stroke-width="1.200" fill="none"/><rect x="1.500" y="5.500" width="4.200" height="4.200" fill="#fff3c0" stroke="#c89a24" stroke-width="1.100"/><rect x="8.500" y="11.500" width="4.200" height="4.200" fill="#fff3c0" stroke="#c89a24" stroke-width="1.100"/><ellipse cx="11.300" cy="4.500" rx="3.800" ry="2.800" transform="rotate(40 11.300 4.500)" fill="#b0642c" stroke="#7a3c14" stroke-width=".6"/><path d="M9 2.500l4.500 4" stroke="#e8b060" stroke-width=".9"/></svg>
<svg style="left:1765px;top:51px;width:17px;height:19px" viewBox="0 0 17 19"><path d="M2 3.500h8M2 6.500h8M4 1.500v7M8 1.500v7" stroke="#9a5c34" stroke-width="1.300"/><rect x="3" y="2.500" width="6" height="5" fill="#fbe8a8" opacity=".7"/><path d="M2 3.500h8M2 6.500h8M4 1.500v7M6 1v2M8 1.500v7" stroke="#9a5c34" stroke-width="1.100"/><path d="M15 1v6q0 1.800-1.800 1.800h-1.700" stroke="#2f68b0" stroke-width="1.700" fill="none"/><circle cx="3.800" cy="11" r="3.500" fill="#2f9a48" stroke="#1f7a35" stroke-width=".6"/><circle cx="9" cy="15" r="3" fill="#7a5cb8"/><path d="M2.300 9.800h3M7.700 14h2.600" stroke="#fff" stroke-width=".8" opacity=".45"/></svg>
<svg style="left:1822px;top:52px;width:16px;height:16px" viewBox="0 0 16 16"><g stroke="#2b5f63" stroke-width="1.100" fill="none"><path d="M5.500 0.800v3M9 2l-1 2.200M1 5h4M1.500 9.500l3.500-1M3.500 14l1.800-3.500M14.500 5.500l-3.500 0.500M15 10.500l-3-1.500M10.500 15l-1.500-3.500"/></g><ellipse cx="8" cy="8.200" rx="3.300" ry="4.500" transform="rotate(-35 8 8.200)" fill="#a9d3a3" stroke="#2a6f80" stroke-width="1.100"/><path d="M6.500 6.500l3.500 3.500" stroke="#e4f4e0" stroke-width="1.400"/></svg>
<svg style="left:1900px;top:101px;width:16px;height:17px" viewBox="0 0 16 17"><defs><linearGradient id="gSq" x1="0" y1="0" x2="0" y2="1"><stop offset="0" stop-color="#eaf4ff"/><stop offset="1" stop-color="#8ec0f0"/></linearGradient></defs><rect x="1.500" y="1.500" width="5" height="5" fill="url(#gSq)" stroke="#1c6cba" stroke-width="1.200"/><rect x="1.500" y="10.500" width="5" height="5" fill="url(#gSq)" stroke="#1c6cba" stroke-width="1.200"/><path d="M8.500 4.500h6M8.500 13.500h6M12 9h2" stroke="#2a78c4" stroke-width="1.200"/><rect x="8.500" y="7.500" width="2" height="2.500" fill="#fff" stroke="#1c6cba" stroke-width="1" shape-rendering="crispEdges"/></svg>
<svg style="left:1902px;top:123px;width:14px;height:17px" viewBox="0 0 14 17"><defs><linearGradient id="gTl" x1="0" y1="0" x2="0" y2="1"><stop offset="0" stop-color="#ffffff"/><stop offset="1" stop-color="#9c9cdc"/></linearGradient></defs><path d="M1.500 1.500h10v13h-2l-1.500-1.500-2 2h-3l-1.500-1.500z" fill="url(#gTl)" stroke="#3c3c3c" stroke-width="1.100"/><path d="M3.500 4.500h6.500M3.500 6.500h6.500M3.500 8.500h6.500M3.500 10.500h6.500" stroke="#3a3a3a" stroke-width="1"/></svg>
<svg style="left:1900px;top:167px;width:15px;height:16px" viewBox="0 0 15 16"><path d="M0.500 1h9.500q3 0 3 2.500t-1.500 3.500q0 3 2 5.500v1h-13z" fill="#e6f2fc" stroke="#6a84b8" stroke-width=".8"/><path d="M0.500 1v13M0.500 14h13" stroke="#3c5a9c" stroke-width="1.100"/><path d="M0.500 1h9" stroke="#b09a50" stroke-width="1"/><path d="M9 1v13M0.500 7.500h11" stroke="#9ab4e0" stroke-width=".9"/><circle cx="5.300" cy="4.400" r="2.400" fill="#e0262c"/><path d="M3 13.500q0-3.500 2.300-4.300 2.300 .8 2.300 4.300z" fill="#f8a81c"/></svg>
<svg style="left:1901px;top:190px;width:15px;height:14px" viewBox="0 0 15 14"><rect x="1" y="0.800" width="13" height="11.700" fill="#fff" stroke="#5870a4" stroke-width="1.200"/><path d="M1 2.200h13" stroke="#6c84b4" stroke-width="1.800"/><path d="M1.500 6.200h12M1.500 9.200h12" stroke="#dfe5ef" stroke-width=".9"/><path d="M5 3v9.500" stroke="#c4cede" stroke-width=".9"/></svg>
<svg style="left:1901px;top:212px;width:15px;height:13px" viewBox="0 0 15 13"><path d="M3.500 1v11M7.500 1v11M11.500 1v11" stroke="#1c2090" stroke-width="1.200"/><ellipse cx="3.500" cy="8" rx="2.500" ry="2" fill="#4ca844" stroke="#2c7c3c" stroke-width=".6"/><ellipse cx="7.500" cy="3.800" rx="2.500" ry="2" fill="#d89a1c" stroke="#a8700c" stroke-width=".6"/><ellipse cx="11.500" cy="9" rx="2.500" ry="2" fill="#5ca8dc" stroke="#2c6cb0" stroke-width=".6"/><path d="M2.500 7.700h2M6.500 3.500h2M10.500 8.700h2" stroke="#fff6b0" stroke-width=".8"/></svg>
<svg style="left:1901px;top:233px;width:15px;height:15px" viewBox="0 0 15 15"><rect x="1.800" y="1.800" width="11.400" height="9" rx=".8" fill="#eaf5ff" stroke="#2a60b0" stroke-width="2"/><path d="M4.300 5.300h4M4.300 7.500h6.500" stroke="#27408a" stroke-width="1.100"/><path d="M5.500 12h4v1h-4z" fill="#2a62b4"/><path d="M2.500 13.300h10" stroke="#2a62b4" stroke-width="1.400"/></svg>
<svg style="left:1900px;top:254px;width:17px;height:17px" viewBox="0 0 17 17"><path d="M0.500 1.500l3.500 2 3.500-2 3.500 2 3.500-2v12l-3.500 2-3.500-2-3.500 2-3.500-2z" fill="#a8e02c" stroke="#6c6c34" stroke-width=".9"/><path d="M4 3.500v12M7.500 1.500v12M11 3.500v12" stroke="#7c9c2c" stroke-width=".7"/><path d="M1 7q3 0 5 3t5-1" stroke="#2c8cc0" stroke-width="1.800" fill="none"/><rect x="10" y="5.500" width="6" height="10" fill="#6c6c3c"/><path d="M11.300 7.500h3.500M11.300 10.500h3.500M11.300 13.500h3.500" stroke="#fff" stroke-width="1.600"/><circle cx="13.500" cy="7.500" r=".7" fill="#e02c2c"/></svg>
<svg style="left:1901px;top:277px;width:15px;height:16px" viewBox="0 0 15 16"><rect x="1.500" y="1.500" width="10" height="13" fill="#f4f6fa" stroke="#b0a06c" stroke-width="1.100"/><rect x="3.500" y="7.500" width="10.500" height="6" fill="#fff" stroke="#2c68b0" stroke-width="1.300"/><path d="M5.500 9.500h1M5.500 11.700h1" stroke="#d03030" stroke-width="1"/><path d="M7.800 9.500h4.500" stroke="#e05050" stroke-width="1"/><path d="M7.800 11.700h4.500" stroke="#3c9c4c" stroke-width="1"/><path d="M5.500 11.700h1" stroke="#2c8c3c" stroke-width="1"/><path d="M3 3l4.500 4.500" stroke="#101850" stroke-width="1.300"/><path d="M2.500 2.500h3.500l-3.500 3.500z" fill="#101850"/></svg>
<svg style="left:1900px;top:299px;width:15px;height:16px" viewBox="0 0 15 16"><path d="M0.500 1h9.500q3 0 3 2.500t-1.500 3.500q0 3 2 5.500v1h-13z" fill="#e6f2fc" stroke="#6a84b8" stroke-width=".8"/><path d="M0.500 1v13M0.500 14h13" stroke="#3c5a9c" stroke-width="1.100"/><path d="M0.500 1h9" stroke="#b09a50" stroke-width="1"/><path d="M9 1v13M0.500 7.500h11" stroke="#9ab4e0" stroke-width=".9"/><circle cx="5.300" cy="4.400" r="2.400" fill="#e0262c"/><rect x="0" y="8" width="7" height="7.500" fill="#d0283c"/><path d="M1.500 9.500l4 4.500M5.500 9.500l-4 4.500" stroke="#fff" stroke-width="1.500"/></svg>
<svg style="left:1901px;top:324px;width:16px;height:14px" viewBox="0 0 16 14"><rect x="1" y="1" width="13.500" height="6.500" fill="#d8ecfa" stroke="#8c8468" stroke-width=".9"/><rect x="1.500" y="2.800" width="7" height="4.200" fill="#4cac4c"/><path d="M1.500 4h7" stroke="#a8e09c" stroke-width="1.200"/><path d="M1 7.500h8" stroke="#3c5c9c" stroke-width="1"/><circle cx="11.500" cy="9.500" r="3.600" fill="#2c9c48" stroke="#1c7c34" stroke-width=".7"/><path d="M10.300 7.500v4l3.300-2z" fill="#fff"/></svg>
<svg style="left:1899px;top:343px;width:18px;height:17px" viewBox="0 0 18 17"><rect x="1" y="1" width="16" height="15" rx="3" fill="#fff"/><g font-family="Liberation Serif,serif" font-weight="bold" style="text-rendering:geometricPrecision"><text x="1.800" y="16" font-size="22.500" fill="#000" stroke="#000" stroke-width=".5" textLength="14.600" lengthAdjust="spacingAndGlyphs">T</text></g><g font-family="Liberation Sans,sans-serif" font-weight="bold" style="text-rendering:geometricPrecision"><text x="0.800" y="13" font-size="12.500" fill="#8c0000" stroke="#8c0000" stroke-width=".5" textLength="6.600" lengthAdjust="spacingAndGlyphs">N</text><text x="10.600" y="13.300" font-size="12.500" fill="#ffc800" stroke="#ffc800" stroke-width=".5" textLength="6.800" lengthAdjust="spacingAndGlyphs">G</text></g></svg>
<div style="left:1911px;top:2px;width:20px;height:47px;border-radius:3px;background:linear-gradient(#ffffff,#e6f6fe 40%,#def2fd);box-shadow:-1px 1px 3px rgba(0,0,0,.28)"></div>
<div style="left:1917.500px;top:15.500px;width:6px;height:5px;border-radius:2.500px;background:#93d878"></div>
</body></html>
